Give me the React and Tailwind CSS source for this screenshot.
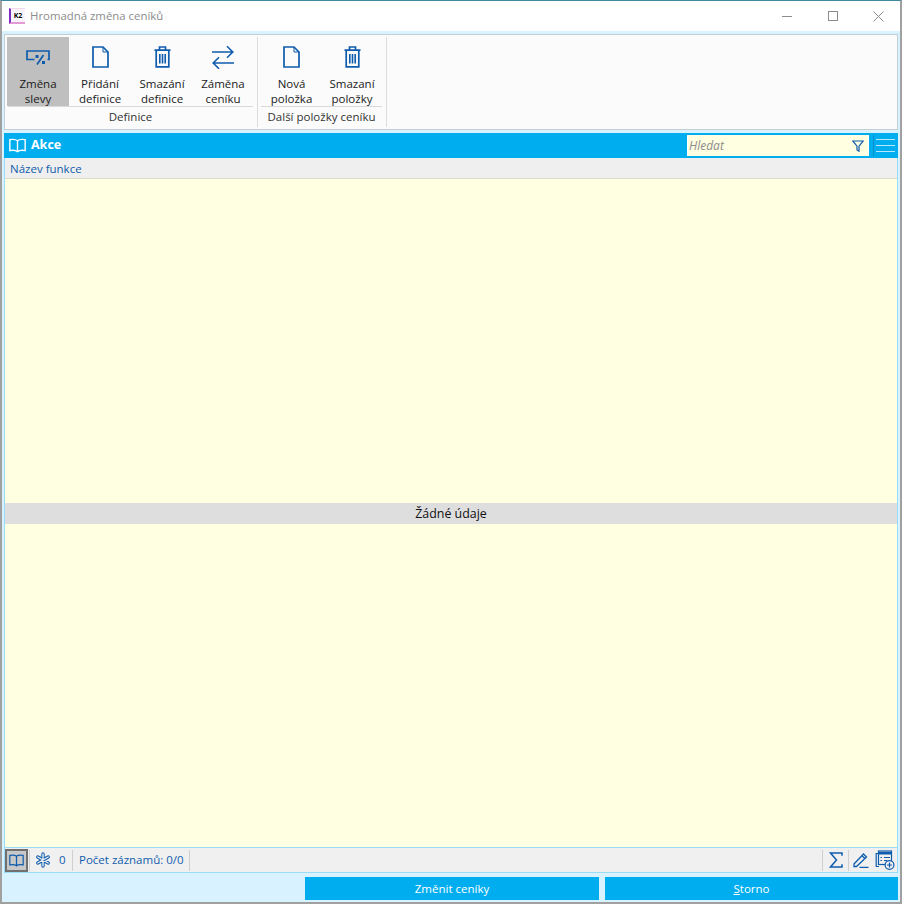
import React from "react";

const BLUE = "#0f5cad";

const DiscountIcon = () => (
  <svg width="24" height="15" viewBox="0 0 24 15" fill="none" stroke={BLUE} strokeWidth="1.7">
    <path d="M8.500 9.500H1V1h22v8.500h-1.500" />
    <path d="M11 14.500L17.500 5" />
    <rect x="9.500" y="5" width="3" height="3" fill={BLUE} stroke="none" />
    <rect x="16" y="11" width="3" height="3" fill={BLUE} stroke="none" />
  </svg>
);

const FileIcon = () => (
  <svg width="17" height="22" viewBox="0 0 17 22" fill="none" stroke={BLUE} strokeWidth="1.700">
    <path d="M1 1h10l5 5v15H1z" />
    <path d="M11 1v5h5" strokeWidth="1" />
  </svg>
);

const TrashIcon = () => (
  <svg width="17" height="22" viewBox="0 0 17 22" fill="none" stroke={BLUE} strokeWidth="1.700">
    <path d="M.5 4.200h16M5.500 4V1h6v3" />
    <path d="M2.200 4.500v16.400h12.600V4.500" />
    <path d="M5.800 8v9.500M8.500 8v9.500M11.200 8v9.500" strokeWidth="1.600" />
  </svg>
);

const SwapIcon = () => (
  <svg width="22" height="24" viewBox="0 0 22 24" fill="none" stroke={BLUE} strokeWidth="1.600">
    <path d="M0 7h20.500M15 1.200L20.800 7 15 12.800" />
    <path d="M22 18H1.500M7 12.200L1.200 18 7 23.800" />
  </svg>
);

const BookIcon = ({ color = BLUE, w = 16, h = 14 }) => (
  <svg width={w} height={h} viewBox="0 0 16 14" fill="none" stroke={color} strokeWidth="1.300">
    <path d="M8 2.500C6.500 1.200 3.500 1 .8 1.500v10.300c2.700-.5 5.700-.3 7.200 1 1.500-1.300 4.500-1.500 7.200-1V1.500C12.500 1 9.500 1.200 8 2.500zM8 2.500v10.300" />
  </svg>
);

const SnowIcon = () => (
  <svg width="16" height="16" viewBox="0 0 16 16" fill="none" strokeLinecap="round" className="ml-[5px]">
    <path d="M8 2v12M2.800 5l10.400 6M13.200 5L2.800 11" stroke={BLUE} strokeWidth="3.400" />
    <path d="M8 2v12M2.800 5l10.400 6M13.200 5L2.800 11" stroke="#f0f0f0" strokeWidth="1.400" />
  </svg>
);

const RibbonButton = ({ icon, lines, active, w }) => (
  <div className={`flex flex-col items-center h-[69px] ${w} ${active ? "bg-[#bfbfbf]" : ""}`}>
    <div className="h-[40px] flex items-center justify-center pt-[1px]">{icon}</div>
    <div className="text-[11.500px] leading-[15px] text-[#1a1a1a] text-center">
      {lines.map((line) => (
        <div key={line}>{line}</div>
      ))}
    </div>
  </div>
);

const RibbonGroup = ({ label, children }) => (
  <div className="flex flex-col items-stretch pr-[1px]">
    <div className="flex border-b border-[#d9d9d9] mx-[3px]">{children}</div>
    <div className="h-[21px] text-[11.500px] leading-[20px] text-center text-[#333]">{label}</div>
  </div>
);

const Divider = () => <div className="w-[1px] h-[21px] bg-[#cfcfcf]" />;

export default function App() {
  return (
    <div
      className="w-[902px] h-[904px] flex flex-col bg-[#d9f2ff] border-t border-t-[#3f8aa0] border-l-2 border-l-[#a0a0a0] border-r-2 border-r-[#a0a0a0] border-b-2 border-b-[#a0a0a0] overflow-hidden"
      style={{ fontFamily: '"Open Sans", "Noto Sans", sans-serif' }}
    >
      {/* title bar */}
      <div className="h-[30px] shrink-0 bg-white flex items-center pl-[7px]">
        <div className="w-[16px] h-[16px] mr-[5px] flex items-center justify-center border-l-2 border-l-[#7a2fc0] border-b-2 border-b-[#e59ad8] border-t border-t-[#f4d9ee] bg-[#faf3fb]">
          <span className="text-[7px] leading-[7px] font-bold text-black bg-white">K2</span>
        </div>
        <span className="text-[11.400px] text-[#8c8c8c]">Hromadná změna ceníků</span>
        <div className="ml-auto flex items-center">
          <div className="w-[46px] flex justify-center">
            <div className="w-[10px] h-[1px] bg-[#8c8c8c]" />
          </div>
          <div className="w-[46px] flex justify-center">
            <div className="w-[10px] h-[10px] border border-[#8c8c8c]" />
          </div>
          <div className="w-[44px] flex justify-center">
            <svg width="11" height="11" viewBox="0 0 11 11" stroke="#8c8c8c" strokeWidth="1">
              <path d="M.5.500l10 10M10.500.500l-10 10" />
            </svg>
          </div>
        </div>
      </div>

      <div className="flex-1 min-h-0 flex flex-col pt-[3px] px-[2px]">
        {/* ribbon */}
        <div className="h-[96px] shrink-0 bg-[#fbfbfb] border border-[#c4cfd3] flex pt-[2px]">
          <div className="flex h-[90px] border-r border-[#dcdcdc]">
            <RibbonGroup label="Definice">
              <div className="flex -ml-[1px]">
                <RibbonButton w="w-[62px]" active icon={<DiscountIcon />} lines={["Změna", "slevy"]} />
                <RibbonButton w="w-[62px]" icon={<FileIcon />} lines={["Přidání", "definice"]} />
                <RibbonButton w="w-[62px]" icon={<TrashIcon />} lines={["Smazání", "definice"]} />
                <RibbonButton w="w-[60px]" icon={<SwapIcon />} lines={["Záměna", "ceníku"]} />
              </div>
            </RibbonGroup>
          </div>
          <div className="flex h-[90px] border-r border-[#dcdcdc]">
            <RibbonGroup label="Další položky ceníku">
              <RibbonButton w="w-[61px]" icon={<FileIcon />} lines={["Nová", "položka"]} />
              <RibbonButton w="w-[60px]" icon={<TrashIcon />} lines={["Smazaní", "položky"]} />
            </RibbonGroup>
          </div>
        </div>

        {/* blue grid header */}
        <div className="h-[25px] mt-[3px] shrink-0 bg-[#00aeef] flex items-center pl-[5px]">
          <BookIcon color="#ffffff" w={17} h={15} />
          <span className="ml-[5px] text-[12.500px] font-bold text-white">Akce</span>
          <div className="ml-auto h-[21px] w-[182px] bg-[#ffffe1] border-x border-x-white pl-[1px] pr-[4px] flex items-center">
            <span className="text-[12px] italic text-[#8c8c8c]">Hledat</span>
            <svg width="12" height="12" viewBox="0 0 12 12" fill="none" stroke={BLUE} strokeWidth="1.200" className="ml-auto">
              <path d="M.8 1h10.400L7 6.200v5L5 10V6.200z" />
            </svg>
          </div>
          <div className="ml-[4px] h-[21px] border-l border-l-[#0a8fc8] pl-[2px] pr-[3px] w-[25px] flex flex-col justify-center gap-[4.500px]">
            <div className="h-[1.500px] bg-[#b9e8fb]" />
            <div className="h-[1.500px] bg-[#b9e8fb]" />
            <div className="h-[1.500px] bg-[#b9e8fb]" />
          </div>
        </div>

        {/* grid */}
        <div className="flex-1 min-h-0 flex flex-col border-x border-x-[#9adcf7]">
          <div className="h-[21px] shrink-0 bg-[#efefef] border-b border-[#dcdccb] pl-[5px] text-[11.500px] leading-[21px] text-[#0f5cad]">
            Název funkce
          </div>
          <div className="h-[324px] shrink-0 bg-[#ffffe1]" />
          <div className="h-[21px] shrink-0 bg-[#dedede] text-center text-[12.400px] leading-[21px] text-[#111]">
            Žádné údaje
          </div>
          <div className="flex-1 bg-[#ffffe1]" />
        </div>

        {/* status bar */}
        <div className="h-[26px] shrink-0 bg-[#f0f0f0] border border-[#9adcf7] flex items-center text-[11.500px] text-[#0f5cad]">
          <div className="w-[23px] h-[23px] bg-[#c8c8c8] border-2 border-[#707070] flex items-center justify-center">
            <BookIcon w={15} h={13} />
          </div>
          <div className="ml-[1px]"><Divider /></div>
          <SnowIcon />
          <span className="ml-[8px] w-[7px]">0</span>
          <span className="ml-[6px]"><Divider /></span>
          <span className="ml-[6px] w-[104px] whitespace-nowrap">Počet záznamů: 0/0</span>
          <span className="ml-[6px]"><Divider /></span>
          <div className="ml-auto flex items-center">
            <Divider />
            <div className="w-[25px] flex justify-center">
              <svg width="14" height="16" viewBox="0 0 14 16" fill="none" stroke={BLUE} strokeWidth="1.500">
                <path d="M13 3.800V1H1.500l6 7-6 7H13v-2.800" />
              </svg>
            </div>
            <Divider />
            <div className="w-[24px] flex justify-center">
              <svg width="16" height="16" viewBox="0 0 16 16" fill="none" stroke={BLUE} strokeWidth="1.300">
                <path d="M1 12L10.500 2 13.500 5 3.500 14.500H1zM9 3.800l3 3M6.500 15.300H15.500" />
              </svg>
            </div>
            <div className="w-[24px] flex justify-center">
              <svg width="20" height="20" viewBox="0 0 20 20" fill="none" stroke={BLUE} strokeWidth="1.200">
                <path d="M3 3.500H1.200v13H4" />
                <rect x="3.500" y="1" width="13" height="13.500" fill="#f0f0f0" />
                <path d="M3.500 3.200h13" strokeWidth="2.600" />
                <path d="M5.500 7.500h1.500M9 7.500h6M5.500 10.500h1.500M9 10.500h3" />
                <circle cx="14.500" cy="15" r="4.400" fill="#f0f0f0" />
                <path d="M14.500 12.500v5M12 15h5" />
              </svg>
            </div>
          </div>
        </div>

        {/* footer */}
        <div className="h-[29px] shrink-0 flex justify-end items-start pt-[4px] gap-[6px]">
          <div className="w-[294px] h-[23px] bg-[#00aeef] text-white text-[11.500px] leading-[23px] text-center">
            Změnit ceníky
          </div>
          <div className="w-[293px] h-[23px] bg-[#00aeef] text-white text-[11.500px] leading-[23px] text-center">
            <span className="underline">S</span>torno
          </div>
        </div>
      </div>
    </div>
  );
}
